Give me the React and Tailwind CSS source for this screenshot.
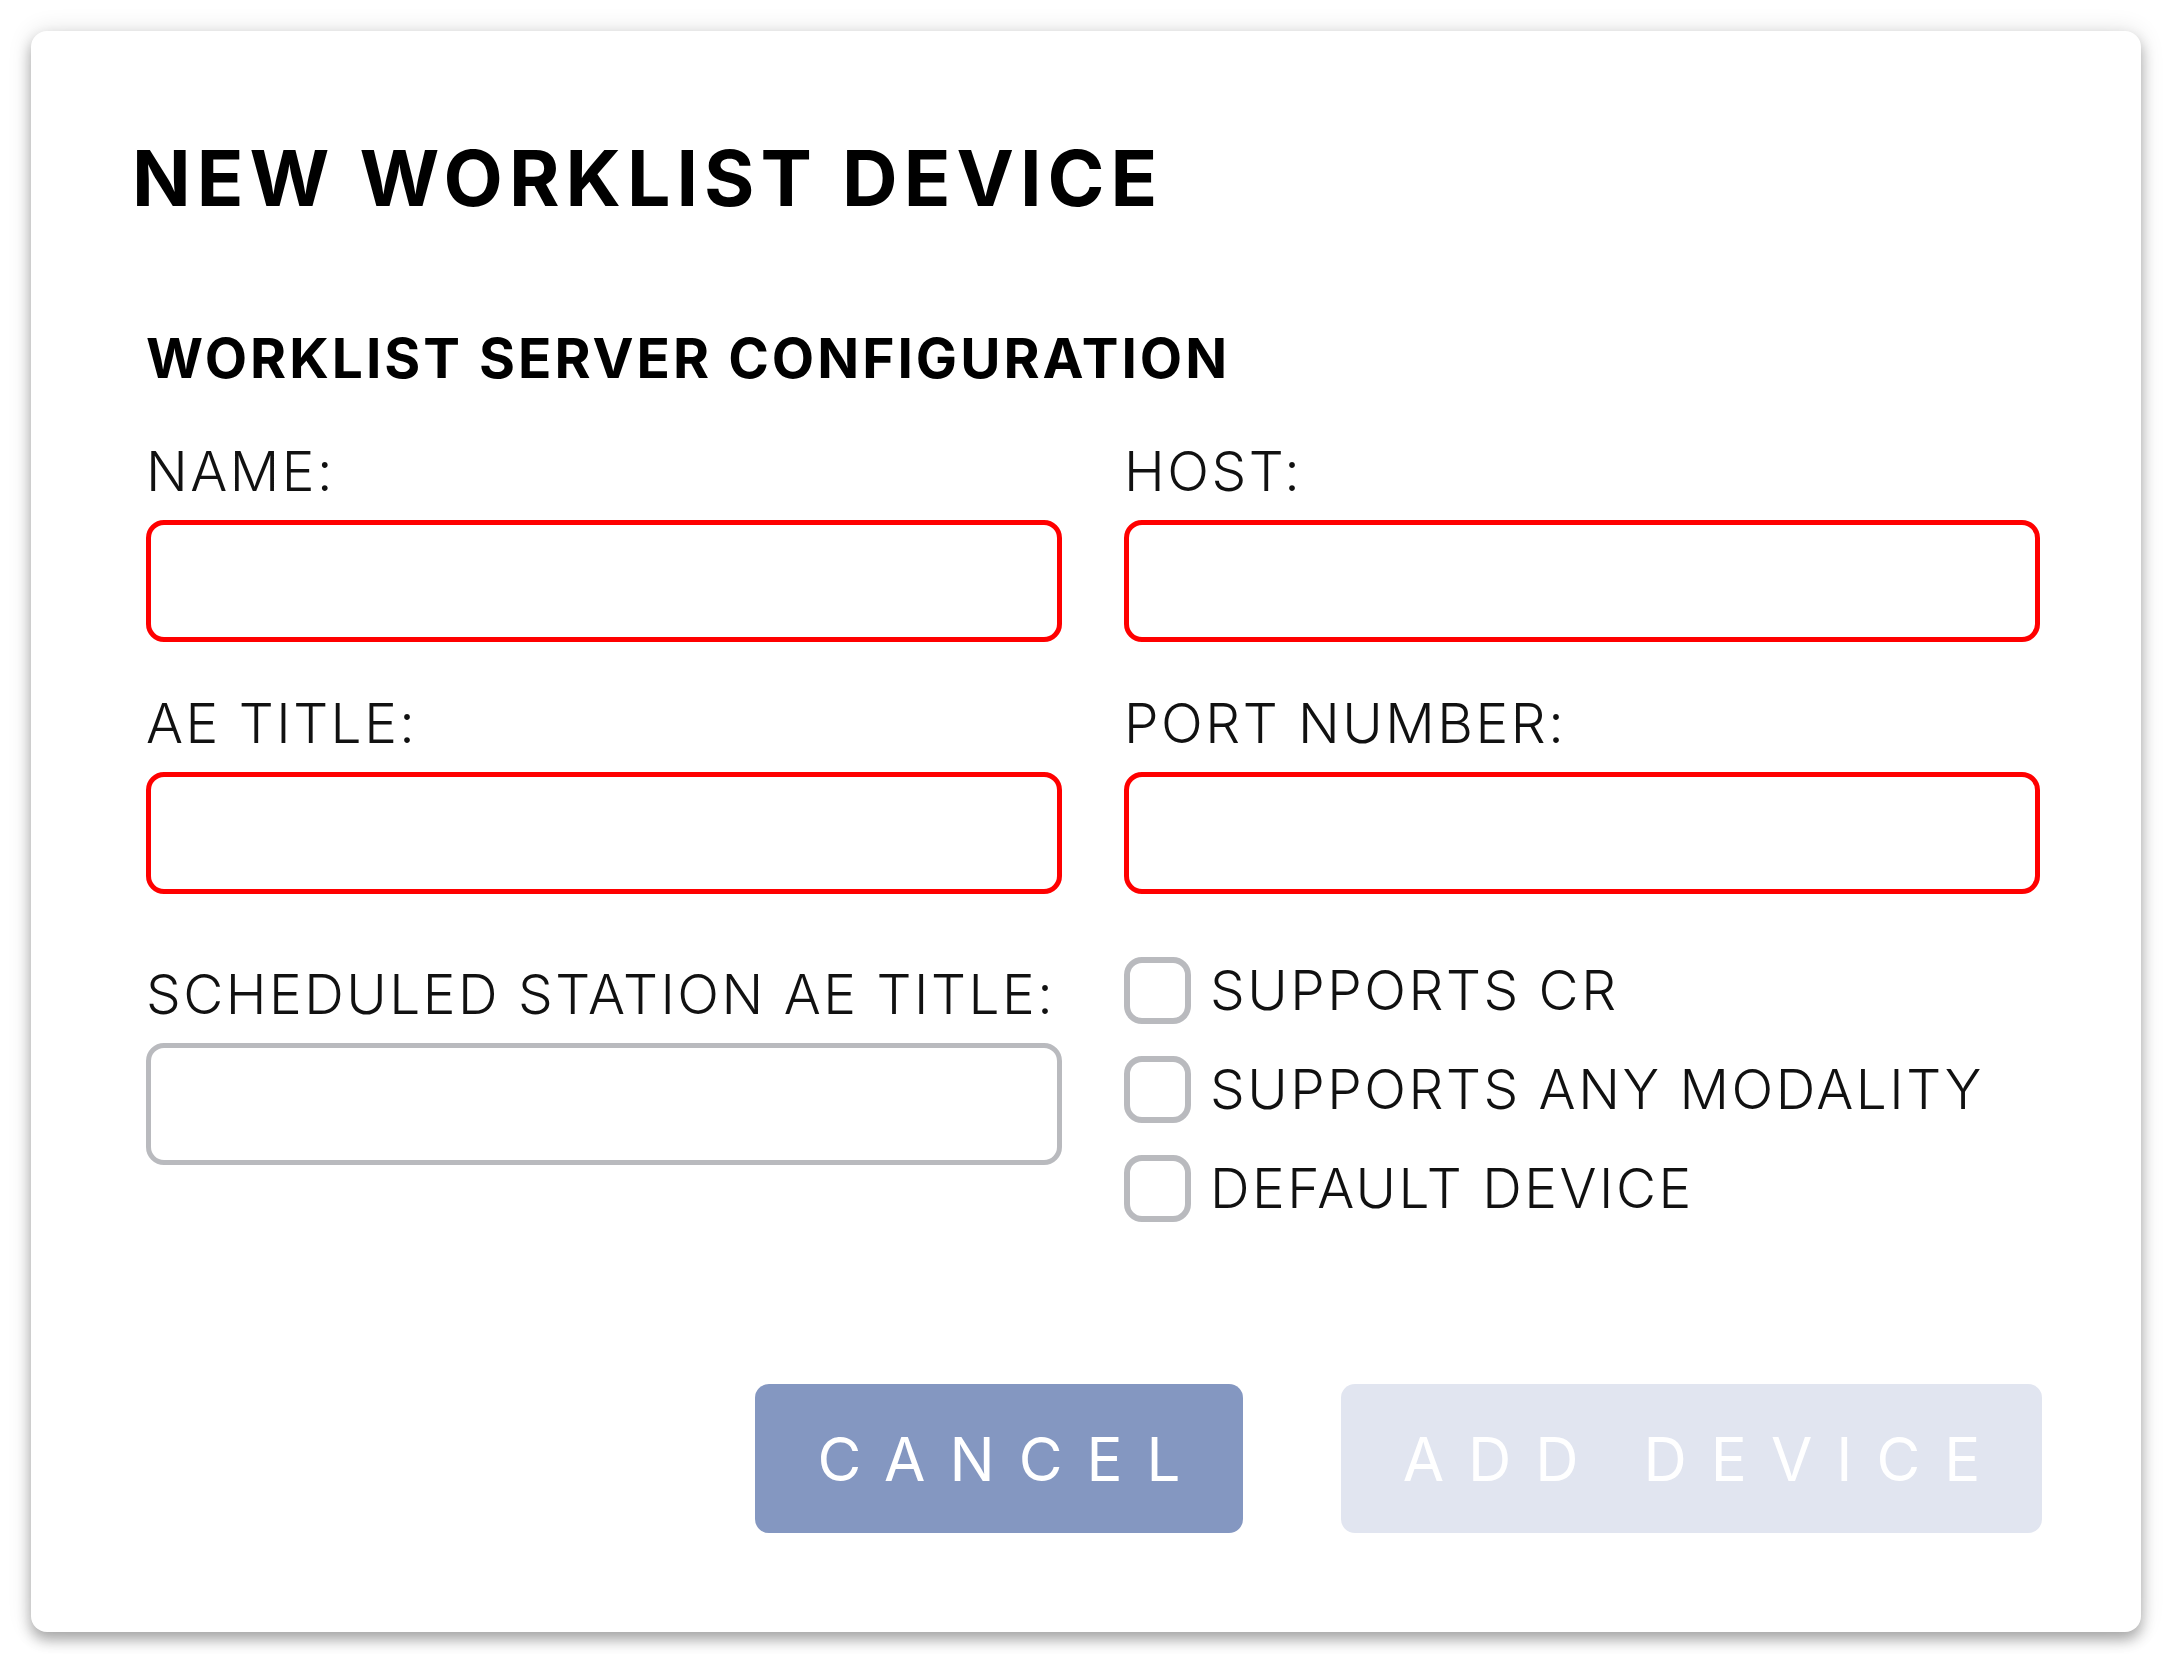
import React from "react";

const font = { fontFamily: "Inter, 'Noto Sans', sans-serif" };

function Field({ label, tone = "red", className = "" }) {
  return (
    <div className={className}>
      <div className="whitespace-nowrap text-[55px] leading-none font-light tracking-[2.5px] text-[#111]">{label}</div>
      <input
        className={
          "mt-[21px] block w-full h-[122px] rounded-[18px] bg-white outline-none border-[5px] " +
          (tone === "red" ? "border-[#ff0000]" : "border-[#b9babe]")
        }
      />
    </div>
  );
}

function Check({ label }) {
  return (
    <label className="flex items-center gap-[19px]">
      <span className="block w-[67px] h-[67px] shrink-0 rounded-[18px] border-[6px] border-[#b9babe] bg-white" />
      <span className="whitespace-nowrap text-[55px] leading-none font-light tracking-[2.5px] text-[#111]">{label}</span>
    </label>
  );
}

export default function App() {
  return (
    <div className="min-h-[1668px] w-full bg-white pt-[31px] pl-[31px]" style={font}>
      <div className="w-[2110px] h-[1601px] rounded-[16px] bg-white shadow-[0_8px_14px_rgba(0,0,0,0.3),0_0_24px_rgba(0,0,0,0.12)] pl-[115px] pr-[101px] pt-[109px] flex flex-col">
        <h1 className="-ml-[14px] text-[77px] leading-none font-bold tracking-[6px] text-black">NEW WORKLIST DEVICE</h1>

        <h2 className="mt-[114px] text-[55px] leading-none font-bold tracking-[3px] text-black">WORKLIST SERVER CONFIGURATION</h2>

        <div className="mt-[58px] grid grid-cols-2 gap-x-[62px]">
          <Field label="NAME:" />
          <Field label="HOST:" />
          <Field label="AE TITLE:" className="mt-[54px]" />
          <Field label="PORT NUMBER:" className="mt-[54px]" />
          <Field label="SCHEDULED STATION AE TITLE:" tone="gray" className="mt-[73px]" />
          <div className="mt-[63px] flex flex-col gap-[32px]">
            <Check label="SUPPORTS CR" />
            <Check label="SUPPORTS ANY MODALITY" />
            <Check label="DEFAULT DEVICE" />
          </div>
        </div>

        <div className="mt-auto mb-[99px] -mr-[2px] flex justify-end gap-[98px]">
          <button className="w-[488px] h-[149px] rounded-[14px] bg-[#8497c1] text-white text-[60px] leading-none font-normal tracking-[24px] pl-[24px]">
            CANCEL
          </button>
          <button disabled className="w-[701px] h-[149px] rounded-[14px] bg-[#e1e5f0] text-white text-[60px] leading-none font-normal tracking-[24px] pl-[24px]">
            ADD DEVICE
          </button>
        </div>
      </div>
    </div>
  );
}
